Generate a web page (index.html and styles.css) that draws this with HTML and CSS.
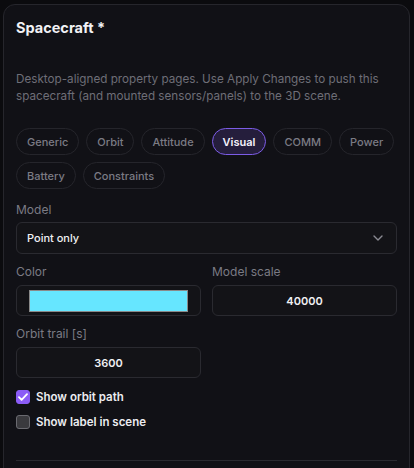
FILE: index.html
```html
<!DOCTYPE html>
<html>
<head>
<meta charset="utf-8">
<link rel="stylesheet" href="styles.css">
</head>
<body>
<div class="card">
  <h1 class="title">Spacecraft *</h1>
  <p class="desc">Desktop-aligned property pages. Use Apply Changes to push this spacecraft (and mounted sensors/panels) to the 3D scene.</p>
  <div class="tabs">
    <span class="tab">Generic</span>
    <span class="tab">Orbit</span>
    <span class="tab">Attitude</span>
    <span class="tab active">Visual</span>
    <span class="tab">COMM</span>
    <span class="tab">Power</span>
    <span class="tab">Battery</span>
    <span class="tab">Constraints</span>
  </div>
  <div class="field">
    <div class="label">Model</div>
    <div class="select">
      <span>Point only</span>
      <svg class="chev" width="10" height="6" viewBox="0 0 10 6"><path d="M1 1l4 4 4-4" fill="none" stroke="#8a8a92" stroke-width="1.4" stroke-linecap="round" stroke-linejoin="round"/></svg>
    </div>
  </div>
  <div class="grid">
    <div class="field">
      <div class="label">Color</div>
      <div class="input colorbox"><div class="swatch"></div></div>
    </div>
    <div class="field">
      <div class="label">Model scale</div>
      <div class="input">40000</div>
    </div>
    <div class="field">
      <div class="label">Orbit trail [s]</div>
      <div class="input">3600</div>
    </div>
  </div>
  <div class="checks">
    <label class="check"><span class="box on"><svg width="10" height="8" viewBox="0 0 10 8"><path d="M1 4.2l2.6 2.6L9 1.2" fill="none" stroke="#fff" stroke-width="1.8" stroke-linecap="round" stroke-linejoin="round"/></svg></span>Show orbit path</label>
    <label class="check"><span class="box"></span>Show label in scene</label>
  </div>
  <div class="divider"></div>
</div>
</body>
</html>
```
FILE: styles.css
```css
html, body {
  margin: 0;
  padding: 0;
  background: #0b0b0e;
  font-family: Inter, "Noto Sans", sans-serif;
  color: #e8e8ec;
  height: 100%;
  overflow: hidden;
}
.card {
  margin: 4px 4px 0 3px;
  border: 1px solid #26262c;
  border-radius: 12px;
  background: #111116;
  padding: 13px 12px 40px 12px;
}
.title {
  margin: 0;
  font-size: 14.5px;
  line-height: 20px;
  font-weight: 700;
  color: #f2f2f5;
}
.desc {
  margin: 33px 0 0 0;
  font-size: 11.7px;
  line-height: 17px;
  color: #6e6e77;
}
.tabs {
  display: flex;
  flex-wrap: wrap;
  gap: 7px;
  margin-top: 23px;
}
.tab {
  box-sizing: border-box;
  height: 27px;
  display: inline-flex;
  align-items: center;
  padding: 0 10px;
  border: 1px solid #25252b;
  border-radius: 14px;
  font-size: 11px;
  font-weight: 500;
  color: #7b7b84;
}
.tab.active {
  background: #251e3c;
  border-color: #7c5ce6;
  color: #f4f2fb;
  font-weight: 600;
}
.field {
  display: flex;
  flex-direction: column;
}
.tabs + .field {
  margin-top: 13px;
}
.label {
  font-size: 12px;
  line-height: 16px;
  color: #7b7b84;
  margin-bottom: 5px;
}
.tabs + .field .label {
  margin-bottom: 4px;
}
.select {
  box-sizing: border-box;
  height: 32px;
  border: 1px solid #2a2a30;
  border-radius: 6px;
  background: #131317;
  display: flex;
  align-items: center;
  justify-content: space-between;
  padding: 0 13px 0 10px;
  font-size: 11px;
  font-weight: 500;
  color: #f0f0f3;
}
.grid {
  display: grid;
  grid-template-columns: 1fr 1fr;
  column-gap: 11px;
  row-gap: 10px;
  margin-top: 10px;
}
.input {
  box-sizing: border-box;
  height: 31px;
  border: 1px solid #2a2a30;
  border-radius: 6px;
  background: #131317;
  display: flex;
  align-items: center;
  justify-content: center;
  font-size: 11px;
  font-weight: 600;
  color: #f0f0f3;
}
.colorbox {
  padding: 4px 12px 3px 12px;
  align-items: stretch;
}
.swatch {
  flex: 1;
  background: #66e6ff;
  border: 1px solid #8a8a8a;
}
.checks {
  display: flex;
  flex-direction: column;
  gap: 9px;
  margin-top: 11px;
}
.check {
  display: flex;
  align-items: center;
  gap: 6px;
  height: 16px;
  font-size: 11.5px;
  font-weight: 600;
  color: #ececf0;
}
.box {
  box-sizing: border-box;
  width: 14px;
  height: 14px;
  border-radius: 3px;
  border: 1px solid #6a6a70;
  background: #3a3a3e;
  display: inline-flex;
  align-items: center;
  justify-content: center;
}
.box.on {
  background: #8b5cf6;
  border-color: #8b5cf6;
}
.divider {
  height: 1px;
  background: #2a2a30;
  margin-top: 30px;
}
```
